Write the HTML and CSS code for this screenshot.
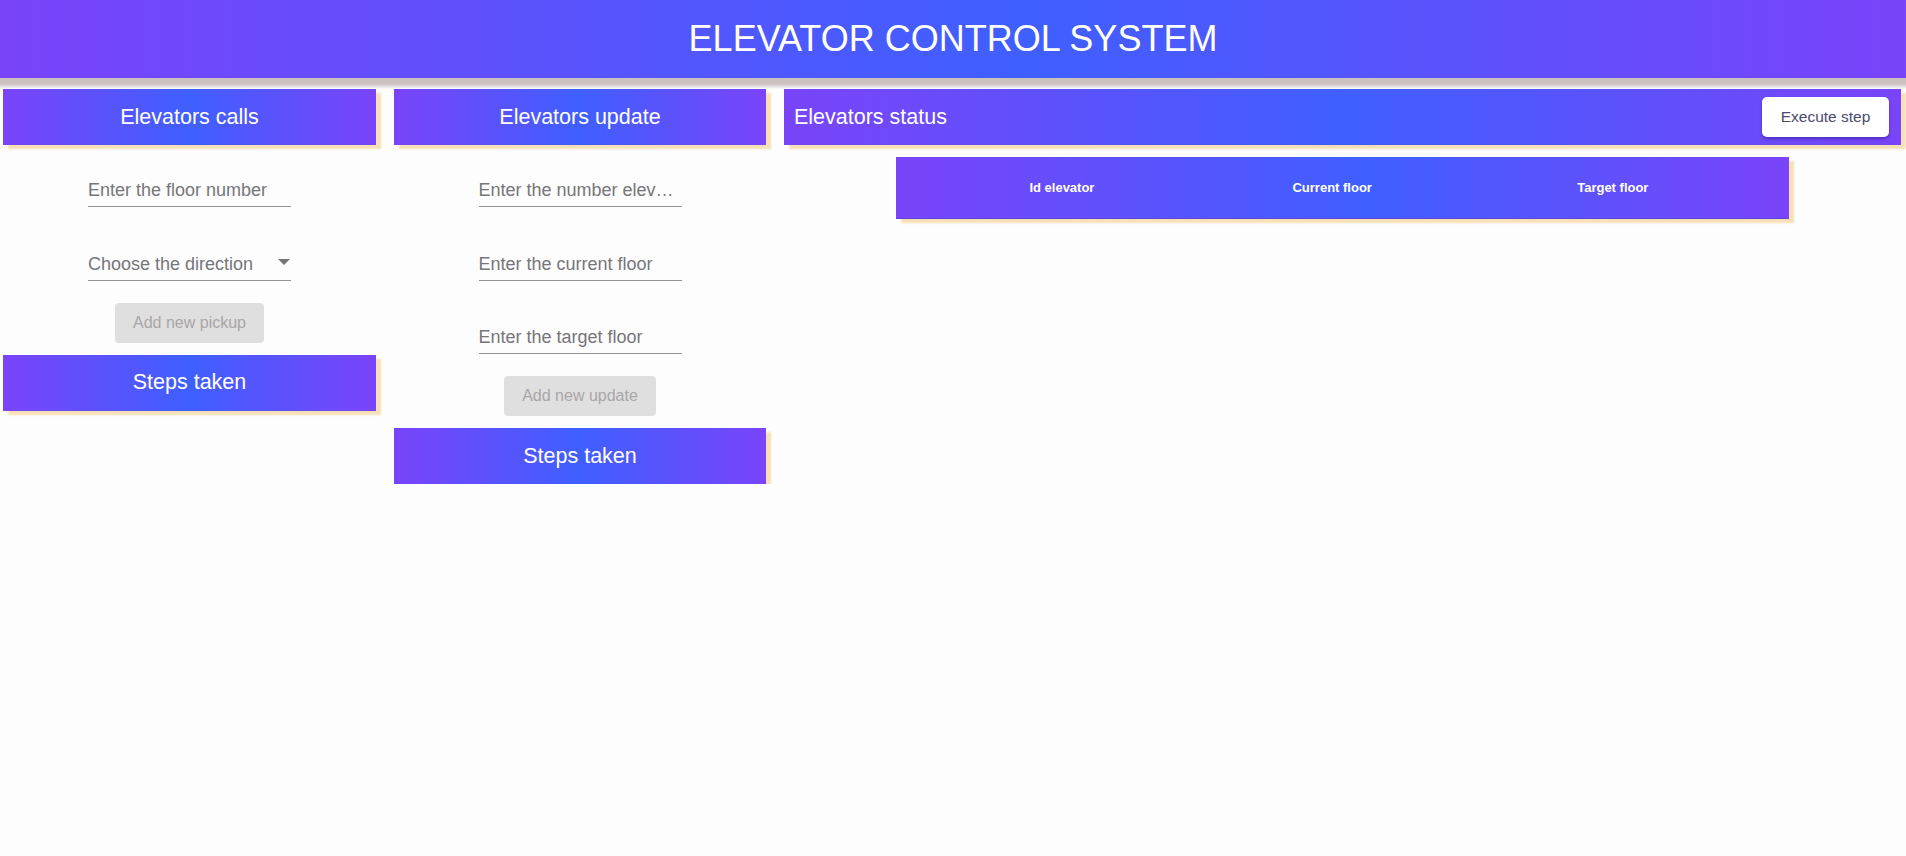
FILE: index.html
```html
<!DOCTYPE html>
<html lang="en">
<head>
<meta charset="utf-8">
<title>Elevator Control System</title>
<link rel="stylesheet" href="styles.css">
</head>
<body>
<header class="app-header">ELEVATOR CONTROL SYSTEM</header>
<div class="header-shadow"></div>
<main class="board">
  <section class="col col-calls">
    <div class="panel-title">Elevators calls</div>
    <div class="form">
      <div class="field"><span class="ph">Enter the floor number</span></div>
      <div class="field select">
        <span class="ph">Choose the direction</span>
        <svg class="arrow" width="12" height="6" viewBox="0 0 10 5"><path d="M0 0l5 5 5-5z" fill="#757575"/></svg>
      </div>
      <button class="btn-disabled" disabled>Add new pickup</button>
    </div>
    <div class="panel-title">Steps taken</div>
  </section>
  <section class="col col-update">
    <div class="panel-title">Elevators update</div>
    <div class="form">
      <div class="field"><span class="ph">Enter the number elevator</span></div>
      <div class="field"><span class="ph">Enter the current floor</span></div>
      <div class="field"><span class="ph">Enter the target floor</span></div>
      <button class="btn-disabled" disabled>Add new update</button>
    </div>
    <div class="panel-title">Steps taken</div>
  </section>
  <section class="col col-status">
    <div class="panel-title status-title">
      <span>Elevators status</span>
      <button class="btn-execute">Execute step</button>
    </div>
    <div class="status-table">
      <div class="th">Id elevator</div>
      <div class="th">Current floor</div>
      <div class="th">Target floor</div>
    </div>
  </section>
</main>
</body>
</html>
```
FILE: styles.css
```css
html, body {
  margin: 0;
  padding: 0;
  background: #fdfdfd;
  font-family: "Liberation Sans", Arial, sans-serif;
}

.app-header {
  height: 78px;
  display: flex;
  align-items: center;
  justify-content: center;
  color: #ffffff;
  font-size: 36px;
  background: linear-gradient(to right, #7a44f9 0%, #3f5fff 54%, #7a44f9 100%);
}

.header-shadow {
  height: 11px;
  background: linear-gradient(to bottom, #cbbfbf 0%, #cdc2c2 55%, #eef0f0 90%, #fdfdfd 100%);
}

.board {
  display: flex;
  gap: 18px;
  padding: 0 5px 0 3px;
  align-items: flex-start;
}

.col-calls { width: 373px; }
.col-update { width: 372px; }
.col-status { flex: 1; }

.panel-title {
  height: 56px;
  display: flex;
  align-items: center;
  justify-content: center;
  color: #ffffff;
  font-size: 21.5px;
  background: linear-gradient(to right, #7a44f9 0%, #3f5fff 50%, #7a44f9 100%);
  box-shadow: 5px 4px 2px #f7dfb5;
}

.form {
  display: flex;
  flex-direction: column;
  align-items: center;
  gap: 23.5px;
  padding-top: 12px;
  padding-bottom: 12px;
}

.field {
  width: 203px;
  height: 50px;
  box-sizing: border-box;
  display: flex;
  align-items: flex-end;
  border-bottom: 1px solid #949494;
  padding-bottom: 5px;
}

.ph {
  display: block;
  font-size: 18px;
  line-height: 22px;
  color: #75757a;
  white-space: nowrap;
  overflow: hidden;
  text-overflow: ellipsis;
  min-width: 0;
  flex: 1;
}

.select .arrow {
  flex: none;
  margin: 0 1px 10px 8px;
}

.btn-disabled {
  margin-top: -1.5px;
  height: 40px;
  padding: 0 18px;
  border: none;
  border-radius: 4px;
  background: #e0dfdf;
  color: #a8a6a6;
  font-family: "Liberation Sans", Arial, sans-serif;
  font-size: 16px;
}

.status-title {
  justify-content: space-between;
  padding: 0 12px 0 10px;
}

.btn-execute {
  height: 40px;
  width: 127px;
  border: none;
  border-radius: 5px;
  background: #ffffff;
  color: #4b4970;
  font-family: "Liberation Sans", Arial, sans-serif;
  font-size: 15.5px;
  box-shadow: 0 2px 3px rgba(40, 20, 120, 0.45);
}

.status-table {
  width: 80%;
  margin: 12px auto 0;
  height: 62px;
  box-sizing: border-box;
  display: grid;
  grid-template-columns: 37.2% 23.3% 1fr;
  align-items: center;
  background: linear-gradient(to right, #7a44f9 0%, #3f5fff 53%, #7a44f9 100%);
  border-bottom: 1px solid #5a46df;
  box-shadow: 5px 4px 2px #f7dfb5;
}

.th {
  text-align: center;
  color: #ffffff;
  font-weight: bold;
  font-size: 13px;
}
```
